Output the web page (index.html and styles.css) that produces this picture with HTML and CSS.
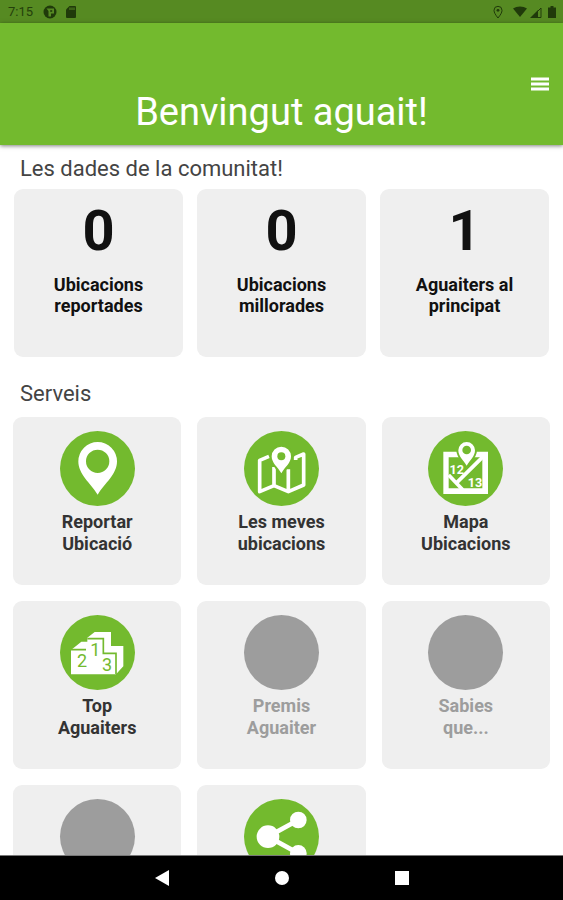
FILE: index.html
```html
<!DOCTYPE html>
<html lang="ca">
<head>
<meta charset="utf-8">
<meta name="viewport" content="width=device-width, initial-scale=1">
<title>Aguait</title>
<link rel="stylesheet" href="styles.css">
</head>
<body>
<div class="status">
  <div class="status-left">
    <span class="clock">7:15</span>
    <svg class="status-icon" viewBox="0 0 14 14"><circle cx="7" cy="7" r="6.5"/><path class="cut" d="M3.500 3.500h7.500v5H8v3H5.500V6z"/><path d="M7.200 5.200h2v1.600h-2z"/></svg>
    <svg class="status-icon" viewBox="0 0 14 14"><path d="M5.500 1H11a1 1 0 0 1 1 1v10a1 1 0 0 1-1 1H3a1 1 0 0 1-1-1V4.500z"/><path class="cut" d="M5.500 2.500h1V5h-1zM7.500 2.500h1V5h-1zM9.500 2.500h1V5h-1z"/></svg>
  </div>
  <div class="status-right">
    <svg class="pin-icon" viewBox="0 0 14 14"><path class="line" d="M7 13C4.500 9.800 3 7.600 3 5.300a4 4 0 0 1 8 0C11 7.600 9.500 9.800 7 13z"/><circle cx="7" cy="5.300" r="1.400"/></svg>
    <svg class="status-icon" viewBox="0 0 14 14"><path d="M7 12 0 3.500C4 .8 10 .8 14 3.500z"/></svg>
    <svg class="status-icon" viewBox="0 0 14 14"><path d="M1 13 9 5v8z"/><path class="line" d="M2.500 12.500 12 3v9.500z"/></svg>
    <svg class="status-icon" viewBox="0 0 14 14"><path d="M5.500 1h3v1.500H11V13H3V2.500h2.500z"/></svg>
  </div>
</div>
<header class="header">
  <h1 class="title">Benvingut aguait!</h1>
  <button class="menu" type="button" aria-label="Menú">
    <svg viewBox="0 0 18 14"><path d="M0 2h18M0 7h18M0 12h18"/></svg>
  </button>
</header>
<main class="content">
  <h2 class="heading">Les dades de la comunitat!</h2>
  <section class="stats">
    <article class="card"><strong class="number">0</strong><p class="label">Ubicacions<br>reportades</p></article>
    <article class="card"><strong class="number">0</strong><p class="label">Ubicacions<br>millorades</p></article>
    <article class="card"><strong class="number">1</strong><p class="label">Aguaiters al<br>principat</p></article>
  </section>
  <h2 class="heading heading-services">Serveis</h2>
  <section class="services">
    <button class="card service" type="button">
      <svg class="badge" viewBox="0 0 225 225"><circle class="disc" cx="112.500" cy="112.500" r="112.500"/><path class="fill" fill-rule="evenodd" d="M113 191C91 156 55 130 55 91a58 58 0 0 1 116 0c0 39-36 65-58 100zM113 56a35 35 0 1 0 0 70 35 35 0 0 0 0-70z"/></svg>
      <span class="label">Reportar<br>Ubicació</span>
    </button>
    <button class="card service" type="button">
      <svg class="badge" viewBox="0 0 225 225"><circle class="disc" cx="112.500" cy="112.500" r="112.500"/><path class="stroke" d="M75 76 47 88v94l43-18 43 18 46-20V69l-24 10v8M90 164v-56M133 181v-66"/><path class="pin" d="M112 127C101 108 83 96 83 76a29 29 0 0 1 58 0c0 20-18 32-29 51z"/><circle class="disc" cx="112" cy="76" r="12"/></svg>
      <span class="label">Les meves<br>ubicacions</span>
    </button>
    <button class="card service" type="button">
      <svg class="badge" viewBox="0 0 225 225"><circle class="disc" cx="112.500" cy="112.500" r="112.500"/><path class="fill" fill-rule="evenodd" d="M46 62h134v127H46zM62 79v93h101V79z"/><path class="road" d="m62 132 42 44M166 76l-79 78"/><path class="pin" d="M116 104C105 86 91 76 91 58a25 25 0 0 1 50 0c0 18-14 28-25 46z"/><circle class="disc" cx="116" cy="57" r="13"/><text class="digits" x="86" y="129">12</text><text class="digits" x="141" y="169">13</text></svg>
      <span class="label">Mapa<br>Ubicacions</span>
    </button>
    <button class="card service" type="button">
      <svg class="badge" viewBox="0 0 225 225"><circle class="disc" cx="112.500" cy="112.500" r="112.500"/><path class="fill" d="m82 68 22-17h49v42h37v61l-22 24H33v-73l31-25h18z"/><path class="edge" d="M82 71h48v44h38v62M33 104h45"/><text class="step" x="66" y="157">2</text><text class="step" x="106" y="124">1</text><text class="step" x="141" y="168">3</text></svg>
      <span class="label">Top<br>Aguaiters</span>
    </button>
    <button class="card service" type="button" disabled><span class="badge blank"></span><span class="label">Premis<br>Aguaiter</span></button>
    <button class="card service" type="button" disabled><span class="badge blank"></span><span class="label">Sabies<br>que...</span></button>
    <button class="card service" type="button" disabled aria-label="Servei no disponible"><span class="badge blank"></span></button>
    <button class="card service" type="button" aria-label="Compartir">
      <svg class="badge" viewBox="0 0 225 225"><circle class="disc" cx="112.500" cy="112.500" r="112.500"/><path class="link" d="M163 63 72 113l91 50"/><circle class="fill" cx="72" cy="113" r="34"/><circle class="fill" cx="163" cy="63" r="25"/><circle class="fill" cx="163" cy="163" r="25"/></svg>
    </button>
  </section>
</main>
<nav class="navbar">
  <button type="button" aria-label="Enrere"><svg viewBox="0 0 24 24"><path d="M5 12 19 4v16z"/></svg></button>
  <button type="button" aria-label="Inici"><svg viewBox="0 0 24 24"><circle cx="12" cy="12" r="7"/></svg></button>
  <button type="button" aria-label="Recents"><svg viewBox="0 0 24 24"><path d="M5 5h14v14H5z"/></svg></button>
</nav>
</body>
</html>
```
FILE: styles.css
```css
* {
  box-sizing: border-box;
}

body {
  margin: 0;
  height: 100vh;
  display: flex;
  flex-direction: column;
  background: #fff;
  color: #111;
  font-family: Roboto, sans-serif;
}

button {
  border: 0;
  padding: 0;
  background: none;
  color: inherit;
  font: inherit;
}

h1,
h2,
p {
  margin: 0;
  font-weight: 400;
}

svg {
  display: block;
}

.status {
  flex: none;
  display: flex;
  justify-content: space-between;
  align-items: center;
  height: 23px;
  padding: 0 4px 0 8px;
  background: #568a22;
  color: #24400b;
}

.status-left,
.status-right {
  display: flex;
  align-items: center;
}

.status-left {
  gap: 7px;
}

.status-right {
  gap: 2px;
}

.clock {
  margin-right: 3px;
  font-size: 13px;
}

.status-icon,
.pin-icon {
  width: 14px;
  height: 14px;
  fill: #203a0a;
}

.pin-icon {
  margin-right: 6px;
}

.status .cut {
  fill: #568a22;
}

.status .line {
  fill: none;
  stroke: #203a0a;
}

.header {
  flex: none;
  position: relative;
  z-index: 1;
  display: grid;
  align-items: end;
  height: 122px;
  padding-bottom: 11px;
  background: #73ba2e;
  box-shadow: 0 1px 4px rgba(0, 0, 0, 0.500);
}

.title {
  color: #fff;
  font-size: 38px;
  line-height: 44px;
  text-align: center;
}

.menu {
  position: absolute;
  right: 14px;
  top: 54px;
}

.menu svg {
  width: 18px;
  height: 14px;
  fill: none;
  stroke: #fff;
  stroke-width: 3;
}

.content {
  flex: 1;
  min-height: 0;
  overflow: hidden;
  padding-top: 10px;
}

.heading {
  padding: 0 20px;
  color: #444;
  font-size: 22px;
  line-height: 28px;
}

.heading-services {
  padding-top: 23px;
}

.stats,
.services {
  display: grid;
  grid-template-columns: repeat(3, 1fr);
}

.stats {
  gap: 14px;
  padding: 6px 14px 0;
}

.services {
  gap: 16px;
  padding: 9px 13px 16px;
}

.card {
  display: flex;
  flex-direction: column;
  align-items: center;
  min-height: 168px;
  border-radius: 9px;
  background: #efefef;
  text-align: center;
}

.number {
  margin-top: 9px;
  font-size: 56px;
  line-height: 66px;
}

.label {
  font-size: 18px;
  font-weight: 700;
  line-height: 21px;
}

.stats .label {
  margin-top: 10px;
}

.service {
  padding-top: 14px;
  color: #333;
}

.service:disabled {
  color: #9d9d9d;
}

.service .label {
  margin-top: 5px;
  line-height: 22px;
}

.badge {
  flex: none;
  width: 75px;
  height: 75px;
}

.blank {
  border-radius: 50%;
  background: #9d9d9d;
}

.disc {
  fill: #73ba2e;
}

.fill {
  fill: #fff;
}

.stroke,
.road,
.link,
.edge {
  fill: none;
  stroke: #fff;
  stroke-width: 11;
  stroke-linejoin: round;
}

.link {
  stroke-width: 14;
}

.edge {
  stroke: #73ba2e;
  stroke-width: 5;
  stroke-linejoin: miter;
}

.pin {
  fill: #fff;
  stroke: #73ba2e;
  stroke-width: 12;
  paint-order: stroke;
}

.digits,
.step {
  font-size: 38px;
  font-weight: 700;
  text-anchor: middle;
  fill: #fff;
}

.step {
  font-size: 54px;
  font-weight: 400;
  fill: #73ba2e;
}

.navbar {
  flex: none;
  display: flex;
  justify-content: center;
  align-items: center;
  gap: 96px;
  height: 45px;
  border-top: 1px solid #777;
  background: #000;
}

.navbar svg {
  width: 24px;
  height: 24px;
  fill: #fff;
}
```
